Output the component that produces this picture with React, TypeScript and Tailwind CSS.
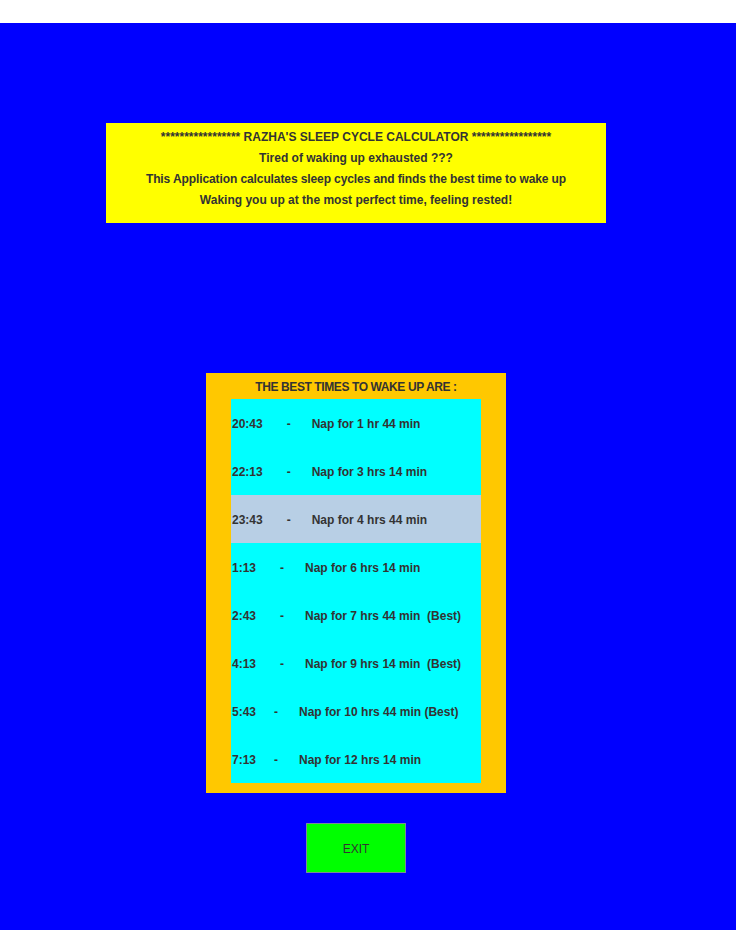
import React from "react";

const rows = [
  { t: "20:43", dash: "ml-6", nap: "Nap for 1 hr 44 min", hi: false },
  { t: "22:13", dash: "ml-6", nap: "Nap for 3 hrs 14 min", hi: false },
  { t: "23:43", dash: "ml-6", nap: "Nap for 4 hrs 44 min", hi: true },
  { t: "1:13", dash: "ml-6", nap: "Nap for 6 hrs 14 min", hi: false },
  { t: "2:43", dash: "ml-6", nap: "Nap for 7 hrs 44 min  (Best)", hi: false },
  { t: "4:13", dash: "ml-6", nap: "Nap for 9 hrs 14 min  (Best)", hi: false },
  { t: "5:43", dash: "ml-[18px]", nap: "Nap for 10 hrs 44 min (Best)", hi: false },
  { t: "7:13", dash: "ml-[18px]", nap: "Nap for 12 hrs 14 min", hi: false },
];

export default function App() {
  return (
    <div
      className="w-[736px] h-[930px] bg-white text-[#333333] text-[12px]"
      style={{ fontFamily: '"Liberation Sans", Arial, sans-serif' }}
    >
      <div className="h-[23px] bg-white" />
      <div className="h-[907px] bg-[#0000ff] pt-[100px]">
        <div className="ml-[106px] w-[500px] h-[100px] bg-[#ffff00] pt-[4px] flex flex-col items-center font-bold leading-[21px]">
          <div>***************** RAZHA'S SLEEP CYCLE CALCULATOR *****************</div>
          <div>Tired of waking up exhausted ???</div>
          <div className="tracking-[-0.1px]">This Application calculates sleep cycles and finds the best time to wake up</div>
          <div>Waking you up at the most perfect time, feeling rested!</div>
        </div>
        <div className="mt-[150px] ml-[206px] w-[300px] h-[420px] bg-[#ffc800] flex flex-col items-center">
          <div className="h-[26px] pt-[2px] flex items-center font-bold tracking-[-0.4px]">THE BEST TIMES TO WAKE UP ARE :</div>
          <div className="w-[250px] h-[384px] bg-[#00ffff] flex flex-col">
            {rows.map((r) => (
              <div
                key={r.t}
                className={`h-[48px] pt-[2px] flex items-center pl-px font-bold whitespace-pre ${r.hi ? "bg-[#b8cfe5]" : ""}`}
              >
                <span>{r.t}</span>
                <span className={r.dash}>-</span>
                <span className="ml-[21px]">{r.nap}</span>
              </div>
            ))}
          </div>
        </div>
        <div className="mt-[30px] ml-[306px] w-[100px] h-[50px] pt-[2px] bg-[#00ff00] border border-[#7a8a99] flex items-center justify-center">
          EXIT
        </div>
      </div>
    </div>
  );
}
